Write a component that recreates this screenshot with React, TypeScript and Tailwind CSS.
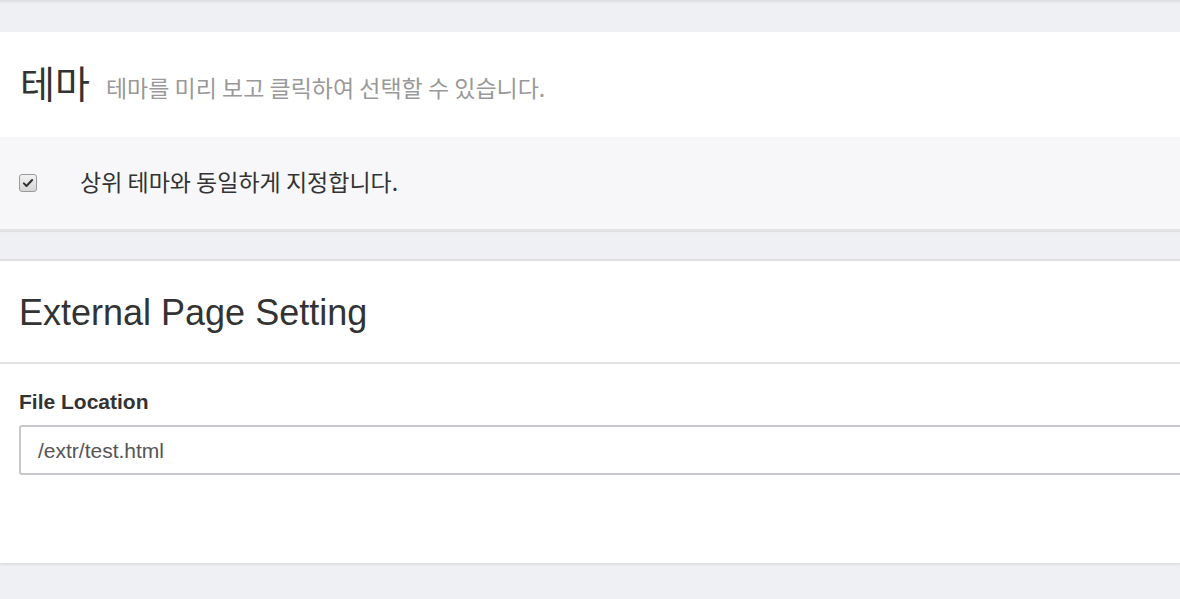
import React from 'react';

const KR = "font-['Noto_Sans_CJK_KR','Noto_Sans',sans-serif]";
const EN = "font-['Liberation_Sans',Arial,sans-serif]";

const CheckMark: React.FC = () => (
  <span className="flex h-[18px] w-[18px] items-center justify-center rounded-[3px] border border-[#9a9a9a] bg-gradient-to-b from-[#f2f2f2] to-[#d6d6d6]">
    <svg viewBox="0 0 16 16" className="h-[12px] w-[12px]">
      <path d="M2.5 8.5l3.5 3.5 7.5-8" fill="none" stroke="#333" strokeWidth={2.8} strokeLinecap="round" strokeLinejoin="round" />
    </svg>
  </span>
);

export default function App() {
  return (
    <div className="h-[599px] overflow-hidden bg-[#eff0f4]">
      {/* shadow of the card above */}
      <div className="h-[4px] bg-gradient-to-b from-[#dcdcdf] to-[#eff0f4]" />

      {/* Theme card */}
      <section className="mt-[28px] bg-white shadow-[0_1px_1px_rgba(0,0,0,0.06)]">
        <div className="flex h-[105px] items-center px-[20px] pb-[6px]">
          <h2 className={`${KR} text-[38px] leading-none text-[#333]`}>테마</h2>
          <span className={`${KR} ml-[16px] mt-[12px] text-[23px] leading-none text-[#999]`}>
            테마를 미리 보고 클릭하여 선택할 수 있습니다.
          </span>
        </div>
        <div className="flex h-[94px] items-center border-b-2 border-[#e4e4e7] bg-[#f7f7f9] pl-[19px]">
          <CheckMark />
          <span className={`${KR} ml-[43px] mb-[3px] text-[23px] leading-none text-[#333]`}>
            상위 테마와 동일하게 지정합니다.
          </span>
        </div>
      </section>

      {/* External page card */}
      <section className={`${EN} mt-[28px] border-t-2 border-[#dedee0] bg-white shadow-[0_2px_2px_rgba(0,0,0,0.08)]`}>
        <div className="flex h-[103px] items-center border-b-2 border-[#e2e2e4] px-[19px] pt-[2px]">
          <h2 className="text-[36px] leading-none text-[#333]">External Page Setting</h2>
        </div>
        <div className="h-[199px] pl-[19px] pt-[27px]">
          <label className="block text-[21px] font-bold leading-none text-[#333]">File Location</label>
          <div className="mt-[13px] flex h-[50px] w-[1200px] items-center rounded-[3px] border-2 border-[#c8c8cc] pl-[17px]">
            <span className="text-[21px] leading-none text-[#555]">/extr/test.html</span>
          </div>
        </div>
      </section>
    </div>
  );
}
